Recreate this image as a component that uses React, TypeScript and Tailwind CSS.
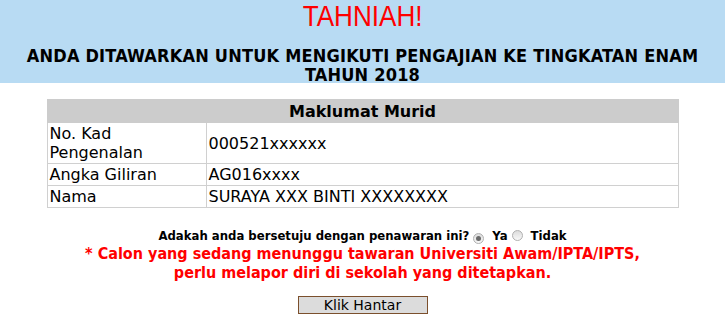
import React, { useState } from "react";

const rows = [
    { label: "No. Kad Pengenalan", value: "000521xxxxxx" },
    { label: "Angka Giliran", value: "AG016xxxx" },
    { label: "Nama", value: "SURAYA XXX BINTI XXXXXXXX" },
];

const Radio = ({ checked, onClick }: { checked: boolean; onClick: () => void }) => (
    <span
        onClick={onClick}
        className="inline-flex items-center justify-center w-[11px] h-[11px] ml-[4px] mr-[8px] rounded-full border border-[#b0b0b0] bg-gradient-to-b from-[#dcdcdc] to-[#f8f8f8] align-[-1px] cursor-pointer"
    >
        {checked && <span className="w-[5px] h-[5px] rounded-full bg-[#6a6a6a]" />}
    </span>
);

const App = () => {
    const [agree, setAgree] = useState(true);

    return (
        <div className="w-[725px] h-[323px] bg-white font-['DejaVu_Sans',Verdana,sans-serif] text-black">
            {/* Header */}
            <div className="bg-[#b8dbf3] h-[83px] text-center">
                <div>
                    <span className="inline-block scale-x-[0.9] font-['Liberation_Sans',Arial,sans-serif] text-[29px] leading-[33px] text-[#ff0000]">
                        TAHNIAH!
                    </span>
                </div>
                <div className="mt-[13px] px-[20px] font-['DejaVu_Sans_Condensed','DejaVu_Sans',sans-serif] font-bold text-[18px] leading-[19px] tracking-[0.2px]">
                    ANDA DITAWARKAN UNTUK MENGIKUTI PENGAJIAN KE TINGKATAN ENAM TAHUN 2018
                </div>
            </div>

            {/* Student info */}
            <table className="mx-auto mt-[16px] w-[632px] border-collapse text-[16px] leading-[19px]">
                <thead>
                    <tr>
                        <th colSpan={2} className="bg-[#cccccc] border border-[#cccccc] h-[23px] font-bold">
                            Maklumat Murid
                        </th>
                    </tr>
                </thead>
                <tbody>
                    {rows.map((r) => (
                        <tr key={r.label}>
                            <td className="w-[159px] border border-[#d0d0d0] px-[2px] py-[1px] text-left">{r.label}</td>
                            <td className="border border-[#d0d0d0] px-[2px] py-[1px] text-left">{r.value}</td>
                        </tr>
                    ))}
                </tbody>
            </table>

            {/* Question */}
            <div className="mt-[20px] text-center font-['DejaVu_Sans_Condensed','DejaVu_Sans',sans-serif] text-[13px] leading-[16px] font-bold">
                Adakah anda bersetuju dengan penawaran ini?
                <Radio checked={agree} onClick={() => setAgree(true)} />
                Ya
                <Radio checked={!agree} onClick={() => setAgree(false)} />
                Tidak
            </div>
            <div className="text-center text-[#ff0000] font-['DejaVu_Sans_Condensed','DejaVu_Sans',sans-serif] font-bold text-[16px] leading-[19px]">
                * Calon yang sedang menunggu tawaran Universiti Awam/IPTA/IPTS,
                <br />
                perlu melapor diri di sekolah yang ditetapkan.
            </div>

            <div className="mt-[14px] flex justify-center">
                <button
                    type="submit"
                    className="w-[130px] h-[18px] bg-[#dcdcdc] border border-[#7b4f2c] text-[14px] leading-[14px] text-black"
                >
                    Klik Hantar
                </button>
            </div>
        </div>
    );
};

export default App;
